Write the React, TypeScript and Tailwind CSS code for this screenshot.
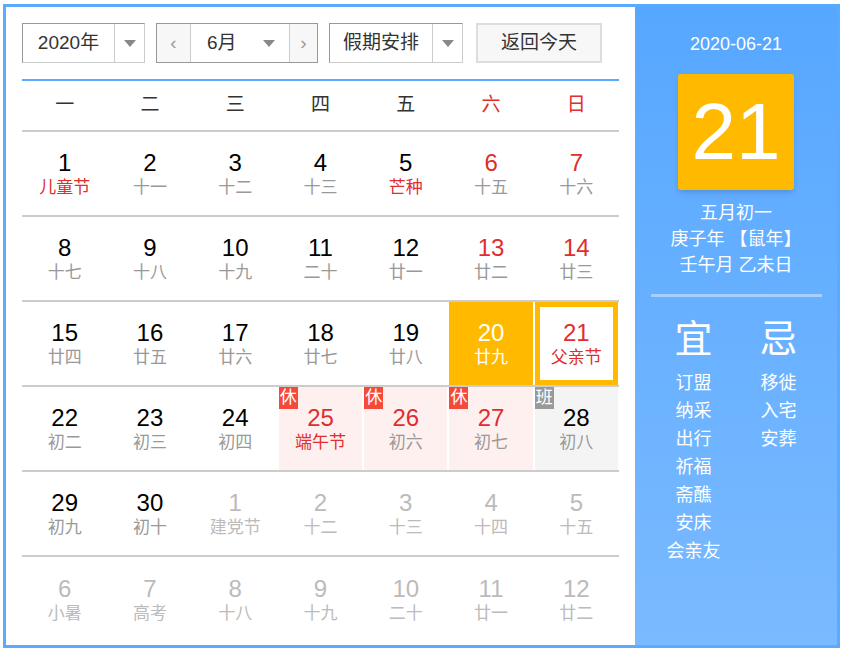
import React from "react";

type Cell = { d: number; l: string; red?: boolean; lred?: boolean; dim?: boolean; tag?: "休" | "班"; kind?: "sel" | "today" | "hol" | "work" };

const rows: Cell[][] = [
  [{ d: 1, l: "儿童节", lred: true }, { d: 2, l: "十一" }, { d: 3, l: "十二" }, { d: 4, l: "十三" }, { d: 5, l: "芒种", lred: true }, { d: 6, l: "十五", red: true }, { d: 7, l: "十六", red: true }],
  [{ d: 8, l: "十七" }, { d: 9, l: "十八" }, { d: 10, l: "十九" }, { d: 11, l: "二十" }, { d: 12, l: "廿一" }, { d: 13, l: "廿二", red: true }, { d: 14, l: "廿三", red: true }],
  [{ d: 15, l: "廿四" }, { d: 16, l: "廿五" }, { d: 17, l: "廿六" }, { d: 18, l: "廿七" }, { d: 19, l: "廿八" }, { d: 20, l: "廿九", kind: "sel" }, { d: 21, l: "父亲节", red: true, lred: true, kind: "today" }],
  [{ d: 22, l: "初二" }, { d: 23, l: "初三" }, { d: 24, l: "初四" }, { d: 25, l: "端午节", red: true, lred: true, tag: "休", kind: "hol" }, { d: 26, l: "初六", red: true, tag: "休", kind: "hol" }, { d: 27, l: "初七", red: true, tag: "休", kind: "hol" }, { d: 28, l: "初八", tag: "班", kind: "work" }],
  [{ d: 29, l: "初九" }, { d: 30, l: "初十" }, { d: 1, l: "建党节", dim: true }, { d: 2, l: "十二", dim: true }, { d: 3, l: "十三", dim: true }, { d: 4, l: "十四", dim: true }, { d: 5, l: "十五", dim: true }],
  [{ d: 6, l: "小暑", dim: true }, { d: 7, l: "高考", dim: true }, { d: 8, l: "十八", dim: true }, { d: 9, l: "十九", dim: true }, { d: 10, l: "二十", dim: true }, { d: 11, l: "廿一", dim: true }, { d: 12, l: "廿二", dim: true }],
];

const Caret = () => <span className="w-0 h-0 border-l-[6px] border-r-[6px] border-t-[7px] border-l-transparent border-r-transparent border-t-[#888]" />;

function CellView({ c }: { c: Cell }) {
  let bg = "";
  let num = c.dim ? "text-[#bbb]" : c.red ? "text-[#e02d2d]" : "text-black";
  let lun = c.dim ? "text-[#bbb]" : c.lred ? "text-[#e02d2d]" : "text-[#999]";
  if (c.kind === "sel") { bg = "bg-[#ffba00]"; num = "text-white"; lun = "text-white"; }
  if (c.kind === "hol") bg = "bg-[#fff0f0]";
  if (c.kind === "work") bg = "bg-[#f4f4f4]";
  const inner = (
    <div className="flex flex-col items-center justify-center h-full">
      <div className={`text-[24px] leading-[28px] ${num}`}>{c.d}</div>
      <div className={`text-[17px] leading-[22px] ${lun}`}>{c.l}</div>
    </div>
  );
  return (
    <div className={`relative h-full mx-px ${bg}`}>
      {c.tag && (
        <span className={`absolute left-0 top-0 text-white text-[17px] leading-[22px] px-[1px] ${c.tag === "休" ? "bg-[#f54a3a]" : "bg-[#999]"}`}>{c.tag}</span>
      )}
      {c.kind === "today" ? (
        <div className="h-full bg-[#ffba00] p-[5px]"><div className="h-full bg-white">{inner}</div></div>
      ) : inner}
    </div>
  );
}

export default function App() {
  return (
    <div className="w-[843px] h-[652px] bg-white" style={{ fontFamily: '"Liberation Sans", "Noto Sans CJK SC", sans-serif' }}>
      <div className="absolute left-[3px] top-[4px] w-[837px] h-[644px] border-[3px] border-[#5aaaff] flex">
        <div className="w-[629px] bg-white pl-[16px] pr-[11px] pt-[16px]">
          <div className="flex items-center h-[40px] text-[19px] text-[#333]">
            <div className="flex h-full border border-[#999] border-r-[#ccc] border-b-[#ccc] w-[123px]">
              <div className="flex-1 flex items-center justify-center">2020年</div>
              <div className="w-[30px] border-l border-[#ccc] flex items-center justify-center"><Caret /></div>
            </div>
            <div className="flex h-full border border-[#999] ml-[11px] w-[162px]">
              <div className="w-[34px] border-r border-[#ccc] bg-[#f7f7f7] flex items-center justify-center text-[#999]">‹</div>
              <div className="flex-1 flex items-center justify-between pl-[16px] pr-[14px]"><span>6月</span><Caret /></div>
              <div className="w-[28px] border-l border-[#ccc] bg-[#f7f7f7] flex items-center justify-center text-[#999]">›</div>
            </div>
            <div className="flex h-full border border-[#999] border-r-[#ccc] border-b-[#ccc] ml-[11px] w-[134px]">
              <div className="flex-1 flex items-center justify-center">假期安排</div>
              <div className="w-[30px] border-l border-[#ccc] flex items-center justify-center"><Caret /></div>
            </div>
            <div className="h-full border-2 border-[#ddd] bg-[#f7f7f7] ml-[13px] w-[126px] flex items-center justify-center">返回今天</div>
          </div>
          <div className="mt-[16px] w-[597px] border-t-2 border-[#5aaaff]">
            <div className="grid grid-cols-7 h-[51px] items-center text-center text-[19px] text-[#333] border-b-2 border-[#ccc]">
              {["一", "二", "三", "四", "五"].map(w => <div key={w}>{w}</div>)}
              <div className="text-[#e02d2d]">六</div>
              <div className="text-[#e02d2d]">日</div>
            </div>
            {rows.map((r, i) => (
              <div key={i} className={`grid grid-cols-7 h-[85px] ${i < 5 ? "border-b-2 border-[#ccc]" : ""}`}>
                {r.map((c, j) => <CellView key={j} c={c} />)}
              </div>
            ))}
          </div>
        </div>
        <div className="flex-1 bg-gradient-to-b from-[#56a7ff] to-[#7abaff] text-white flex flex-col items-center">
          <div className="mt-[24px] text-[18px]">2020-06-21</div>
          <div className="mt-[16px] w-[116px] h-[116px] bg-[#ffba00] rounded-[3px] shadow-md flex items-center justify-center text-[80px] leading-none">21</div>
          <div className="mt-[10px] text-[18px] leading-[26px] text-center">
            <div>五月初一</div>
            <div>庚子年 【鼠年】</div>
            <div>壬午月 乙未日</div>
          </div>
          <div className="mt-[16px] w-[171px] h-[3px] bg-[#a8d0ff]" />
          <div className="mt-[20px] flex gap-[25px] text-[18px] leading-[28px]">
            <div className="flex flex-col items-center w-[60px]">
              <div className="text-[38px] leading-[44px] mb-[8px]">宜</div>
              {["订盟", "纳采", "出行", "祈福", "斋醮", "安床", "会亲友"].map(t => <div key={t}>{t}</div>)}
            </div>
            <div className="flex flex-col items-center w-[60px]">
              <div className="text-[38px] leading-[44px] mb-[8px]">忌</div>
              {["移徙", "入宅", "安葬"].map(t => <div key={t}>{t}</div>)}
            </div>
          </div>
        </div>
      </div>
    </div>
  );
}
